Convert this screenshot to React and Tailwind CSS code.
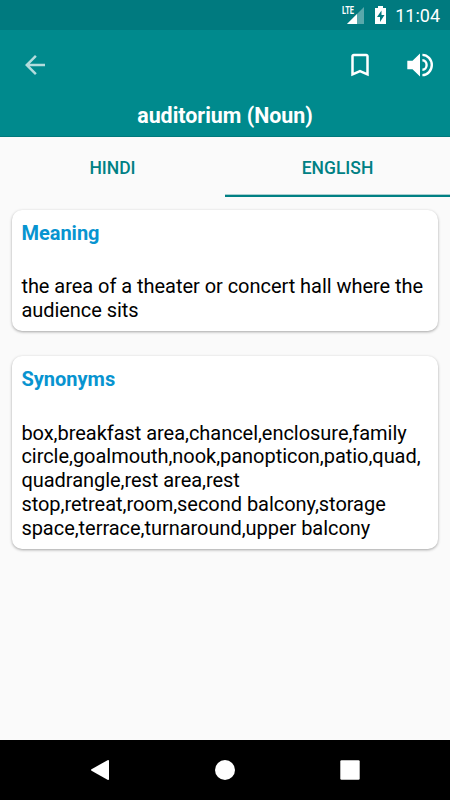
import React from 'react';

const StatusBar = () => (
  <div className="h-[30px] bg-[#007a7f] flex items-center justify-end pr-[10px] text-white">
    <svg className="w-[50px] h-[30px]" viewBox="340 0 50 30">
      <path d="M364 7V24H347Z" fill="#fff" fillOpacity="0.35" />
      <path d="M357 14V24H347Z" fill="#fff" />
      <rect x="341" y="5" width="14.500" height="10" fill="#007a7f" />
      <text x="342" y="14" fill="#fff" className="font-['Roboto',sans-serif] text-[11px] font-bold" textLength="12" lengthAdjust="spacingAndGlyphs">LTE</text>
      <path d="M378 6h5v2h3v16h-11V8h3z" fill="#fff" />
      <path d="M381.500 10.500l-4.500 6.500h3v5l4.500-7h-3z" fill="#007a7f" />
    </svg>
    <span className="ml-[5px] pt-px text-[18px] leading-[30px]">11:04</span>
  </div>
);

const AppBar = ({ title }) => (
  <header className="h-[107px] bg-[#008a8d] border-b border-[#00797c] text-white">
    <div className="h-[70px] pl-[20px] pr-[15px] flex items-center">
      <svg className="w-[30px] h-[30px] opacity-70" viewBox="0 0 24 24" fill="currentColor">
        <path d="M20 11H7.830l5.590-5.590L12 4l-8 8 8 8 1.410-1.410L7.830 13H20v-2z" />
      </svg>
      <svg className="ml-auto w-[30px] h-[30px]" viewBox="0 0 24 24" fill="currentColor">
        <path d="M17 3H7c-1.100 0-2 .9-2 2v16l7-3 7 3V5c0-1.100-.9-2-2-2zm0 15l-5-2.180L7 18V5h10v13z" />
      </svg>
      <svg className="ml-[30px] w-[30px] h-[30px]" viewBox="405 50 30 30" fill="none">
        <path d="M407.300 60.800h5.200l7.500-7.200v22.800l-7.500-7.200h-5.200z" fill="#fff" />
        <path d="M422.400 54.900a9.400 10.100 0 0 1 0 20.200M422.400 60.200a4.200 4.800 0 0 1 0 9.600" stroke="#fff" strokeWidth="2.400" />
      </svg>
    </div>
    <h1 className="text-center text-[21.400px] leading-[31px] font-bold">{title}</h1>
  </header>
);

const Tabs = ({ tabs, active }) => (
  <div className="h-[60px] flex text-[#008084] text-[17.500px] font-medium">
    {tabs.map(tab => (
      <div key={tab} className="flex-1 flex flex-col">
        <div className="flex-1 flex items-center justify-center pt-[6px]">{tab}</div>
        {tab === active && (
          <div className="h-[3px] border-t border-[#a9cfd0] bg-[#008084]" />
        )}
        {tab !== active && <div className="h-[3px]" />}
      </div>
    ))}
  </div>
);

const Card = ({ title, lines }) => (
  <section className="bg-white rounded-[10px] px-[9px] pt-[11px] pb-[8.250px] shadow-[0_1px_3px_rgba(0,0,0,0.35)]">
    <h2 className="text-[20px] leading-[24px] font-bold text-[#0894d0]">{title}</h2>
    <p className="mt-[30.250px] text-[20px] leading-[23.750px] tracking-[-0.040px] text-black whitespace-nowrap">
      {lines.map(line => (
        <span key={line} className="block">{line}</span>
      ))}
    </p>
  </section>
);

const NavBar = () => (
  <nav className="h-[60px] bg-black">
    <svg className="w-full h-full" viewBox="0 0 450 60" fill="#fff">
      <path d="M91.500 29.300L107.500 20.200Q109 19.500 109 21V39Q109 40.500 107.500 39.800L91.500 30.700Q90.500 30 91.500 29.300Z" />
      <circle cx="225" cy="30" r="10" />
      <rect x="340.300" y="20.300" width="19.400" height="19.400" rx="1.200" />
    </svg>
  </nav>
);

const meaning = [
  'the area of a theater or concert hall where the',
  'audience sits'
];

const synonyms = [
  'box,breakfast area,chancel,enclosure,family',
  'circle,goalmouth,nook,panopticon,patio,quad,',
  'quadrangle,rest area,rest',
  'stop,retreat,room,second balcony,storage',
  'space,terrace,turnaround,upper balcony'
];

const App = () => (
  <div className="w-[450px] h-[800px] flex flex-col overflow-hidden bg-[#fafafa] font-['Roboto',sans-serif]">
    <StatusBar />
    <AppBar title="auditorium (Noun)" />
    <Tabs tabs={['HINDI', 'ENGLISH']} active="ENGLISH" />
    <main className="flex-1 px-[12.400px] pt-[13px] flex flex-col gap-[25.250px]">
      <Card title="Meaning" lines={meaning} />
      <Card title="Synonyms" lines={synonyms} />
    </main>
    <NavBar />
  </div>
);

export default App;
